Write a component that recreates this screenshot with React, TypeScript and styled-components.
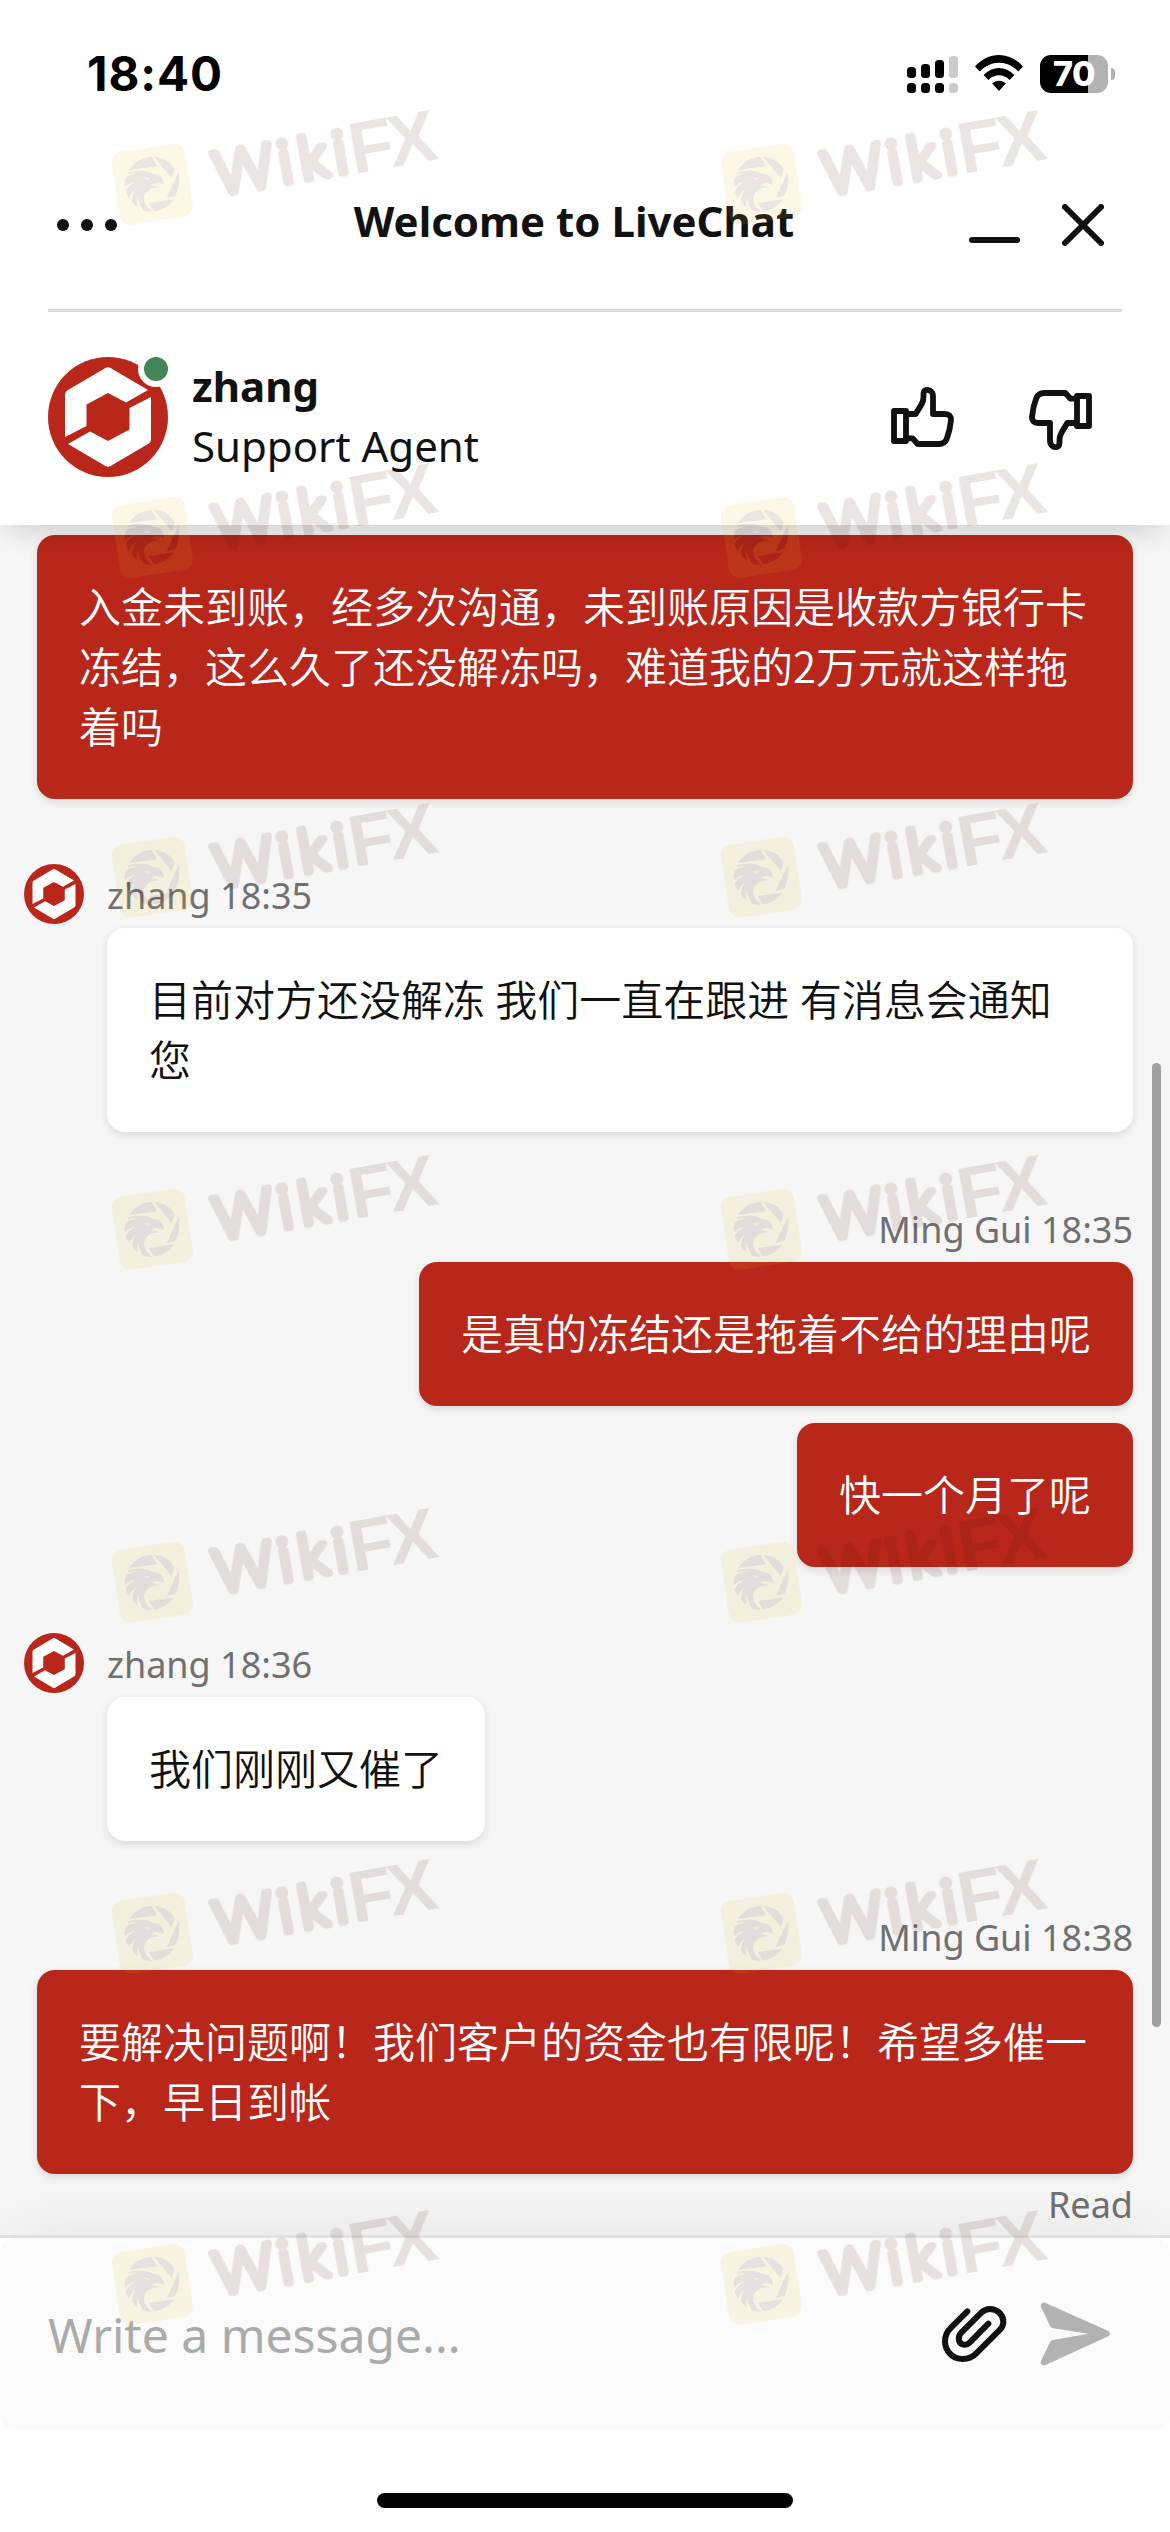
import React from "react";
import styled, { createGlobalStyle, css } from "styled-components";

const LATIN = '"Noto Sans", "Noto Sans CJK SC", sans-serif';
const CJK = '"Noto Sans CJK SC", "Noto Sans", sans-serif';
const BRAND = "#b9271a";
const INK = "#111111";

const GlobalStyle = createGlobalStyle`
  * { box-sizing: border-box; }
  body { margin: 0; background: #ffffff; }
`;

const Screen = styled.div`
  position: relative;
  display: flex;
  flex-direction: column;
  width: 1170px;
  height: 2532px;
  overflow: hidden;
  background: #ffffff;
  color: ${INK};
  font-family: ${LATIN};
`;

const Header = styled.header`
  position: relative;
  z-index: 1;
  flex: none;
  height: 525px;
  background: #ffffff;
  box-shadow: 0 10px 30px -8px rgba(0, 0, 20, 0.2);
`;

const StatusBar = styled.div`
  display: flex;
  justify-content: space-between;
  align-items: center;
  height: 150px;
  padding: 0 55px 2px 87px;
`;

const Clock = styled.div`
  color: #000000;
  font: 750 47.500px/60px Inter, sans-serif;
  letter-spacing: 0.9px;
`;

const StatusIcons = styled.div`
  display: flex;
  align-items: center;
  gap: 17px;
`;

const Battery = styled.div`
  position: relative;
  display: flex;
  align-items: center;
  justify-content: center;
  width: 68px;
  height: 38px;
  margin-right: 7px;
  border-radius: 11px;
  background: linear-gradient(90deg, #000000 70%, #b2b2b2 70%);
  color: #ffffff;
  font: 800 34px/38px Inter, sans-serif;
  letter-spacing: -0.5px;

  &::after {
    content: "";
    position: absolute;
    right: -7px;
    top: 13px;
    width: 4px;
    height: 12px;
    border-radius: 0 4px 4px 0;
    background: #b2b2b2;
  }
`;

const TitleBar = styled.div`
  display: grid;
  grid-template-columns: 195px 1fr 205px;
  align-items: center;
  height: 159px;
  padding: 0 66px 10px 54px;
`;

const Title = styled.h1`
  margin: 0;
  padding-bottom: 8px;
  font-size: 42px;
  line-height: 60px;
  font-weight: 700;
  text-align: center;
  white-space: nowrap;
`;

const WindowActions = styled.div`
  display: flex;
  justify-content: flex-end;
  gap: 42px;
`;

const Divider = styled.hr`
  height: 3px;
  margin: 0 48px;
  border: 0;
  background: #d9dad9;
`;

const AgentBar = styled.div`
  display: flex;
  align-items: flex-start;
  padding: 45px 75px 48px 48px;
`;

const AvatarSlot = styled.div`
  position: relative;
  width: 120px;
  height: 120px;
`;

const OnlineDot = styled.span`
  position: absolute;
  top: -6px;
  right: -6px;
  width: 36px;
  height: 36px;
  border: 6px solid #ffffff;
  border-radius: 50%;
  background: #458656;
`;

const AgentText = styled.div`
  flex: 1;
  margin: -1px 0 0 24px;
  font-size: 42px;
  line-height: 60px;
`;

const AgentName = styled.div`
  font-weight: 700;
`;

const Rating = styled.div`
  display: flex;
  gap: 69px;
  padding-top: 27px;
`;

const Chat = styled.main`
  position: relative;
  flex: none;
  display: flex;
  flex-direction: column;
  height: 1710px;
  padding: 10px 37px 0;
  overflow: hidden;
  background: #f6f6f6;
`;

const Group = styled.section<{ $mine?: boolean; $gap?: number }>`
  display: flex;
  flex-direction: column;
  align-items: ${(p) => (p.$mine ? "flex-end" : "flex-start")};
  margin-top: ${(p) => p.$gap ?? 0}px;
  padding-left: ${(p) => (p.$mine ? 0 : 70)}px;
`;

const MetaRow = styled.div`
  display: flex;
  gap: 23px;
  height: 64px;
`;

const AgentMetaRow = styled(MetaRow)`
  margin-left: -83px;
`;

const Meta = styled.div`
  padding-top: 8px;
  color: #707070;
  font-size: 36px;
  line-height: 48px;
  white-space: nowrap;
`;

const ReadMark = styled(Meta)`
  padding-top: 7px;
`;

const Bubble = styled.p<{ $mine?: boolean }>`
  margin: 0;
  padding: 40px 42px 44px;
  border-radius: 18px;
  font-family: ${CJK};
  font-size: 42px;
  font-weight: 350;
  line-height: 60px;
  word-spacing: 1px;
  box-shadow: 0 3px 9px rgba(0, 0, 30, 0.12);
  ${(p) =>
    p.$mine
      ? css`
          background: ${BRAND};
          color: #ffffff;
        `
      : css`
          background: #ffffff;
          color: ${INK};
        `}

  & + & {
    margin-top: 17px;
  }
`;

const ScrollThumb = styled.div`
  position: absolute;
  top: 538px;
  right: 9px;
  width: 9px;
  height: 964px;
  border-radius: 5px;
  background: #9f9f9f;
`;

const ComposerArea = styled.footer`
  position: relative;
  z-index: 1;
  flex: none;
  border-top: 3px solid #e2e2e2;
  background: #ffffff;
  box-shadow: 0 -12px 66px -12px rgba(0, 0, 20, 0.08);
  clip-path: inset(-120px 0 0 0);
`;

const Composer = styled.div`
  display: flex;
  align-items: center;
  height: 192px;
  padding: 0 54px 0 48px;
  border-radius: 16px;
  background: #fbfbfb;
`;

const Placeholder = styled.div`
  flex: 1;
  padding-top: 1px;
  color: #aaaaaa;
  font-size: 48px;
  line-height: 66px;
`;

const SendSlot = styled.div`
  display: flex;
  margin-left: 33px;
  margin-right: 4px;
`;

const HomeIndicator = styled.div`
  align-self: center;
  width: 416px;
  height: 15px;
  margin-top: 63px;
  border-radius: 8px;
  background: #000000;
`;

const Watermarks = styled.div`
  position: absolute;
  inset: 0;
  z-index: 2;
  pointer-events: none;
`;

const Stamp = styled.svg<{ $x: number; $y: number }>`
  position: absolute;
  left: ${(p) => p.$x}px;
  top: ${(p) => p.$y}px;
  width: 350px;
  height: 130px;
  overflow: visible;
`;

function Signal() {
  const tops = [67, 64, 60, 56];
  return (
    <svg width="51" height="38" viewBox="907 55 51 38">
      {tops.map((top, i) => (
        <g key={top} fill={i === 3 ? "#cbcbcb" : "#000000"}>
          <rect x={907 + i * 14} y={top} width="9" height={78 - top} rx="3.5" />
          <rect x={907 + i * 14} y="83" width="9" height="10" rx="3.5" />
        </g>
      ))}
    </svg>
  );
}

function Wifi() {
  return (
    <svg width="48" height="38" viewBox="0 0 48 38">
      <path d="M0 11.5C13.500-3.800 34.500-3.800 48 11.500L43.200 16.500C32.500 4.900 15.500 4.900 4.800 16.500Z" />
      <path d="M8.600 20C17.500 10.800 30.500 10.800 39.400 20L34.600 25C28.500 18.800 19.500 18.800 13.400 25Z" />
      <path d="M17.200 28.600C21 24.900 27 24.900 30.800 28.600L24 36Z" />
    </svg>
  );
}

function Dots() {
  return (
    <svg width="66" height="14" viewBox="0 0 66 14" fill={INK}>
      <circle cx="9" cy="7" r="6" />
      <circle cx="33" cy="7" r="6" />
      <circle cx="57" cy="7" r="6" />
    </svg>
  );
}

function Minimize() {
  return (
    <svg width="51" height="42" viewBox="0 0 51 42" stroke={INK} strokeWidth="6" strokeLinecap="round">
      <path d="M3 36H48" />
    </svg>
  );
}

function Close() {
  return (
    <svg width="42" height="42" viewBox="0 0 42 42" stroke={INK} strokeWidth="6" strokeLinecap="round">
      <path d="M3 3L39 39M39 3L3 39" />
    </svg>
  );
}

function AgentAvatar({ size }: { size: number }) {
  const half = "M57 11.200Q60 9.200 63 11.200L100 33L78 45.500L60 36L38.500 47.500V69L17 80V38Q17 34.500 20 33Z";
  return (
    <svg width={size} height={size} viewBox="0 0 120 120">
      <circle cx="60" cy="60" r="60" fill={BRAND} />
      <path d={half} fill="#ffffff" />
      <path d={half} fill="#ffffff" transform="rotate(180 60 60)" />
    </svg>
  );
}

function Thumb({ down }: { down?: boolean }) {
  return (
    <svg width="69" height="69" viewBox="204 132 207 207" fill="none" stroke={INK} strokeWidth="17.500" strokeLinejoin="round">
      <g transform={down ? "rotate(180 307.500 235.500)" : undefined}>
        <path d="M222 213H258V303H222Z" />
        <path d="M258 222H287C296 206 305 197 309 182C312 171 309 162 312 155C315 148 328 148 333 154C338 158 339 162 339 170V222H374C388 222 394 229 393 241C391 261 387 279 380 297C375 308 369 312 357 312H293L278 295H260" />
      </g>
    </svg>
  );
}

function Paperclip() {
  return (
    <svg width="66" height="60" viewBox="362 465 198 180" fill="none" stroke={INK} strokeWidth="18" strokeLinecap="round">
      <path d="M441 487L390 538C378 550 374 562 374 577C374 607 397 630 427 630C443 630 456 625 467 614L539 542C546 535 549 529 549 519C549 497 531 480 509 480C499 480 490 484 483 491L423 551C416 558 414 566 416 574C420 588 437 592 448 581L504 524" />
    </svg>
  );
}

function Send() {
  return (
    <svg width="72" height="66" viewBox="660 453 216 198" fill="#b2b2b2">
      <path d="M675 458L865 543Q875 551 865 559L675 646Q668 648 663 641Q661 637 663 633L690 577Q693 571 699 570L805 551L699 535Q693 533 690 527L663 471Q661 467 663 463Q668 456 675 458Z" />
    </svg>
  );
}

function WikiStamp({ x, y }: { x: number; y: number }) {
  return (
    <Stamp $x={x} $y={y} viewBox="0 0 1050 390">
      <g opacity="0.110" fill="#421208">
        <rect x="46.500" y="127.500" width="221" height="221" rx="32" fill="#eeb41c" transform="rotate(-8.700 157 238)" />
        <path d="M87 195C102 171 127 157 154 156L172 184Z" />
        <path d="M162 155C190 157 211 171 224 193L215 219Z" />
        <path d="M236 202C240 228 237 252 225 274L200 279Z" />
        <path d="M147 294L222 283C208 303 188 316 162 319Z" />
        <path
          fillRule="evenodd"
          d="M84 203C100 196 145 194 158 207C180 205 192 220 192 241C184 233 170 233 155 239C164 243 175 241 180 249C160 244 136 256 132 278C131 296 143 310 158 320C145 321 136 319 130 317C122 307 116 291 113 277C111 285 111 293 112 306C107 303 99 295 96 289C96 276 101 263 109 252C98 259 91 269 87 280C82 273 79 266 77 259C83 246 94 238 105 231C94 232 83 238 75 246C73 234 75 226 78 218C89 209 101 208 111 207C101 204 92 204 84 208ZM131 216C138 222 145 219 151 219C147 226 135 226 131 216Z"
        />
        <g transform="translate(388 275) rotate(-10)">
          <text
            x="-33 163 225 330"
            y="-12"
            fontFamily="Lato, sans-serif"
            fontWeight="300"
            fontSize="176"
            stroke="#421208"
            strokeWidth="23"
            strokeLinejoin="round"
          >
            Wiki
          </text>
          <text x="378 497" y="-2" fontFamily="Liberation Sans, Arial, sans-serif" fontWeight="700" fontSize="218">
            FX
          </text>
        </g>
      </g>
    </Stamp>
  );
}

const STAMP_ROWS = [104.5, 457.5, 797.5, 1150, 1502.5, 1854, 2204.5];
const STAMP_COLUMNS = [100, 708.5];

export default function App() {
  return (
    <Screen>
      <GlobalStyle />
      <Header>
        <StatusBar>
          <Clock>18:40</Clock>
          <StatusIcons>
            <Signal />
            <Wifi />
            <Battery>70</Battery>
          </StatusIcons>
        </StatusBar>
        <TitleBar>
          <Dots />
          <Title>Welcome to LiveChat</Title>
          <WindowActions>
            <Minimize />
            <Close />
          </WindowActions>
        </TitleBar>
        <Divider />
        <AgentBar>
          <AvatarSlot>
            <AgentAvatar size={120} />
            <OnlineDot />
          </AvatarSlot>
          <AgentText>
            <AgentName>zhang</AgentName>
            <div>Support Agent</div>
          </AgentText>
          <Rating>
            <Thumb />
            <Thumb down />
          </Rating>
        </AgentBar>
      </Header>

      <Chat>
        <Group $mine>
          <Bubble $mine>入金未到账，经多次沟通，未到账原因是收款方银行卡冻结，这么久了还没解冻吗，难道我的2万元就这样拖着吗</Bubble>
        </Group>
        <Group $gap={65}>
          <AgentMetaRow>
            <AgentAvatar size={60} />
            <Meta>zhang 18:35</Meta>
          </AgentMetaRow>
          <Bubble>目前对方还没解冻 我们一直在跟进 有消息会通知您</Bubble>
        </Group>
        <Group $mine $gap={66}>
          <MetaRow>
            <Meta>Ming Gui 18:35</Meta>
          </MetaRow>
          <Bubble $mine>是真的冻结还是拖着不给的理由呢</Bubble>
          <Bubble $mine>快一个月了呢</Bubble>
        </Group>
        <Group $gap={66}>
          <AgentMetaRow>
            <AgentAvatar size={60} />
            <Meta>zhang 18:36</Meta>
          </AgentMetaRow>
          <Bubble>我们刚刚又催了</Bubble>
        </Group>
        <Group $mine $gap={65}>
          <MetaRow>
            <Meta>Ming Gui 18:38</Meta>
          </MetaRow>
          <Bubble $mine>要解决问题啊！我们客户的资金也有限呢！希望多催一下，早日到帐</Bubble>
          <ReadMark>Read</ReadMark>
        </Group>
        <ScrollThumb />
      </Chat>

      <ComposerArea>
        <Composer>
          <Placeholder>Write a message...</Placeholder>
          <Paperclip />
          <SendSlot>
            <Send />
          </SendSlot>
        </Composer>
      </ComposerArea>
      <HomeIndicator />

      <Watermarks aria-hidden="true">
        {STAMP_ROWS.map((y) => STAMP_COLUMNS.map((x) => <WikiStamp key={`${x}-${y}`} x={x} y={y} />))}
      </Watermarks>
    </Screen>
  );
}
